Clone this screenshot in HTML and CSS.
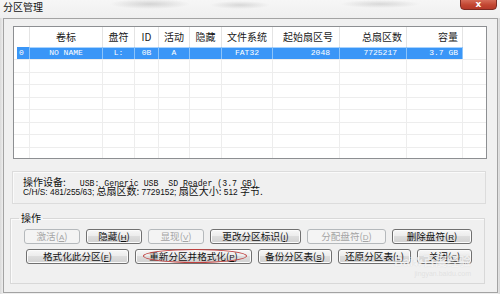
FILE: index.html
```html
<!DOCTYPE html>
<html lang="zh">
<head>
<meta charset="utf-8">
<link rel="stylesheet" href="styles.css">
</head>
<body>
<div class="screen">
  <div class="titlebar">
    <span class="title">分区管理</span>
    <div class="close-btn"><span>x</span></div>
  </div>
  <div class="dialog">
    <div class="list">
      <div class="row head">
        <div class="c c0"></div>
        <div class="c c1 ctr">卷标</div>
        <div class="c c2 ctr">盘符</div>
        <div class="c c3 ctr">ID</div>
        <div class="c c4 ctr">活动</div>
        <div class="c c5 ctr">隐藏</div>
        <div class="c c6 ctr">文件系统</div>
        <div class="c c7 rt">起始扇区号</div>
        <div class="c c8 rt">总扇区数</div>
        <div class="c c9 rt">容量</div>
        <div class="c c10"></div>
      </div>
      <div class="row sel">
        <div class="c c0 mono">0</div>
        <div class="c c1 ctr mono">NO NAME</div>
        <div class="c c2 ctr mono">L:</div>
        <div class="c c3 ctr mono">0B</div>
        <div class="c c4 ctr mono">A</div>
        <div class="c c5 ctr mono"></div>
        <div class="c c6 ctr mono">FAT32</div>
        <div class="c c7 rt mono">2048</div>
        <div class="c c8 rt mono">7725217</div>
        <div class="c c9 rt mono">3.7 GB</div>
        <div class="c c10"></div>
      </div>
      <div class="row"><div class="c c0"></div><div class="c c1"></div><div class="c c2"></div><div class="c c3"></div><div class="c c4"></div><div class="c c5"></div><div class="c c6"></div><div class="c c7"></div><div class="c c8"></div><div class="c c9"></div><div class="c c10"></div></div>
      <div class="row"><div class="c c0"></div><div class="c c1"></div><div class="c c2"></div><div class="c c3"></div><div class="c c4"></div><div class="c c5"></div><div class="c c6"></div><div class="c c7"></div><div class="c c8"></div><div class="c c9"></div><div class="c c10"></div></div>
      <div class="row"><div class="c c0"></div><div class="c c1"></div><div class="c c2"></div><div class="c c3"></div><div class="c c4"></div><div class="c c5"></div><div class="c c6"></div><div class="c c7"></div><div class="c c8"></div><div class="c c9"></div><div class="c c10"></div></div>
      <div class="row"><div class="c c0"></div><div class="c c1"></div><div class="c c2"></div><div class="c c3"></div><div class="c c4"></div><div class="c c5"></div><div class="c c6"></div><div class="c c7"></div><div class="c c8"></div><div class="c c9"></div><div class="c c10"></div></div>
      <div class="row"><div class="c c0"></div><div class="c c1"></div><div class="c c2"></div><div class="c c3"></div><div class="c c4"></div><div class="c c5"></div><div class="c c6"></div><div class="c c7"></div><div class="c c8"></div><div class="c c9"></div><div class="c c10"></div></div>
      <div class="row"><div class="c c0"></div><div class="c c1"></div><div class="c c2"></div><div class="c c3"></div><div class="c c4"></div><div class="c c5"></div><div class="c c6"></div><div class="c c7"></div><div class="c c8"></div><div class="c c9"></div><div class="c c10"></div></div>
      <div class="row"><div class="c c0"></div><div class="c c1"></div><div class="c c2"></div><div class="c c3"></div><div class="c c4"></div><div class="c c5"></div><div class="c c6"></div><div class="c c7"></div><div class="c c8"></div><div class="c c9"></div><div class="c c10"></div></div>
      <div class="row"><div class="c c0"></div><div class="c c1"></div><div class="c c2"></div><div class="c c3"></div><div class="c c4"></div><div class="c c5"></div><div class="c c6"></div><div class="c c7"></div><div class="c c8"></div><div class="c c9"></div><div class="c c10"></div></div>
    </div>

    <div class="info">
      <div class="line"><span class="cjk">操作设备:</span><span class="mono gap">USB: Generic USB&nbsp; SD Reader (3.7 GB)</span></div>
      <div class="line"><span class="sans">C/H/S: 481/255/63;</span> <span class="cjk">总扇区数:</span> <span class="sans">7729152;</span> <span class="cjk">扇区大小:</span> <span class="sans">512</span> <span class="cjk">字节.</span></div>
    </div>

    <fieldset class="ops">
      <legend>操作</legend>
      <div class="btn-row r1">
        <div class="btn dis w56">激活(<u>A</u>)</div>
        <div class="btn w56">隐藏(<u>H</u>)</div>
        <div class="btn dis w56">显现(<u>V</u>)</div>
        <div class="btn w91">更改分区标识(<u>I</u>)</div>
        <div class="btn dis w79">分配盘符(<u>D</u>)</div>
        <div class="btn w80">删除盘符(<u>R</u>)</div>
      </div>
      <div class="btn-row r2">
        <div class="btn w103">格式化此分区(<u>F</u>)</div>
        <div class="btn w117">重新分区并格式化(<u>P</u>)<span class="ring"></span></div>
        <div class="btn w74">备份分区表(<u>S</u>)</div>
        <div class="btn w73">还原分区表(<u>L</u>)</div>
        <div class="btn w55">关闭(<u>C</u>)</div>
      </div>
    </fieldset>
    <div class="watermark"><span class="wm1">Bai<span class="paw">&#10047;</span>百度经验</span><span class="wm2">jingyan.baidu.com</span></div>
  </div>
</div>
</body>
</html>
```

FILE: styles.css
```css
* { box-sizing: border-box; }
html, body { margin: 0; padding: 0; }
body {
  width: 500px;
  height: 294px;
  overflow: hidden;
  background: #ececec;
  font-family: "Noto Sans CJK SC", sans-serif;
  color: #000;
}
.screen {
  width: 500px;
  height: 294px;
  display: flex;
  flex-direction: column;
  background:
    linear-gradient(to right, #d9d9d9 0, #eeeeee 3px, #eeeeee 497px, #d5d5d5 500px);
}
.titlebar {
  position: relative;
  height: 18px;
  flex: none;
  background:
    radial-gradient(ellipse 40px 5px at 150px 4px, rgba(150,150,150,0.35), transparent),
    radial-gradient(ellipse 30px 4px at 240px 5px, rgba(150,150,150,0.3), transparent),
    radial-gradient(ellipse 40px 4px at 380px 4px, rgba(150,150,150,0.3), transparent),
    linear-gradient(#f6f6f6, #efefef);
}
.title {
  display: block;
  padding: 1px 0 0 3px;
  font-size: 10px;
  line-height: 12px;
  color: #111;
}
.close-btn {
  position: absolute;
  top: -2px;
  left: 460px;
  width: 37px;
  height: 12px;
  border: 1px solid #7d2b22;
  border-radius: 0 0 4px 4px;
  background: linear-gradient(#d9735f, #c24631 60%, #b5392a);
  display: flex;
  align-items: center;
  justify-content: center;
}
.close-btn span {
  color: #fff;
  font-family: "DejaVu Sans", sans-serif;
  font-weight: bold;
  font-size: 9px;
  line-height: 9px;
  margin-top: 1px;
}
.dialog {
  position: relative;
  margin: 0 2px 1px 3px;
  flex: 1;
  border: 1px solid #a3a3a3;
  background: #f0f0f0;
  display: flex;
  flex-direction: column;
  align-items: flex-start;
}
.list {
  margin: 7px 0 0 9px;
  width: 474px;
  height: 133px;
  border: 1px solid #8d8f92;
  background: #fff;
  overflow: hidden;
  display: flex;
  flex-direction: column;
}
.row {
  display: flex;
  height: 12.5px;
  flex: none;
  border-bottom: 1px solid #ededed;
}
.row.head {
  height: 20px;
  border-bottom: none;
  font-size: 10px;
  line-height: 20px;
  color: #1a1a1a;
}
.c {
  height: 100%;
  border-right: 1px solid #ededed;
  overflow: hidden;
  white-space: nowrap;
  flex: none;
}
.head .c { border-right-color: #e4e4e4; }
.c0 { width: 16px; }
.c1 { width: 73px; }
.c2 { width: 32px; }
.c3 { width: 24px; }
.c4 { width: 31px; }
.c5 { width: 32px; }
.c6 { width: 51px; }
.c7 { width: 67px; }
.c8 { width: 67px; }
.c9 { width: 56px; }
.c10 { width: 23px; border-right: none; }
.ctr { text-align: center; }
.rt { text-align: right; }
.head .c7 { padding-right: 6px; }
.head .c8 { padding-right: 4px; }
.head .c9 { padding-right: 4px; }
.mono { font-family: "Liberation Mono", monospace; font-size: 8px; }
.row.sel {
  height: 13px;
  border-bottom: 1px solid #ededed;
  line-height: 12px;
  color: #fff;
}
.sel .c { background: #3a96f7; border-right-color: #8cc4fa; box-shadow: inset 0 1px 0 #a7d3ff; }
.sel .c0 { background: linear-gradient(to right, #fff 3px, #3a96f7 3px); padding-left: 5px; box-shadow: none; }
.sel .c10 { background: #fff; box-shadow: none; }
.sel .c7 { padding-right: 9px; }
.sel .c8 { padding-right: 9px; }
.sel .c9 { padding-right: 4px; }

.info {
  margin: 12px 0 0 8px;
  width: 474px;
  height: 33px;
  border: 1px solid #dcdcdc;
  box-shadow: inset 1px 1px 0 #fafafa;
  padding: 5px 0 0 10px;
  display: flex;
  flex-direction: column;
}
.line {
  height: 9px;
  font-size: 10px;
  line-height: 9px;
  white-space: nowrap;
  color: #111;
}
.line .mono { font-size: 8.2px; }
.cjk { font-size: 10px; }
.sans { font-family: "Liberation Sans", sans-serif; font-size: 8.4px; }
.gap { margin-left: 14px; }

.ops {
  margin: 8px 0 0 6px;
  width: 475px;
  height: 72px;
  border: 1px solid #d8d8d8;
  box-shadow: inset 1px 1px 0 #fbfbfb;
  padding: 5px 0 0 0;
}
.ops legend {
  margin-left: 8px;
  padding: 0 2px;
  font-size: 10px;
  line-height: 12px;
  color: #111;
}
.btn-row {
  display: flex;
  gap: 6px;
}
.r1 { margin-left: 13px; }
.r2 { margin-left: 15px; margin-top: 5px; }
.btn {
  position: relative;
  height: 15px;
  flex: none;
  border: 1px solid #707070;
  border-radius: 3px;
  background: linear-gradient(#f7f7f7 0, #ececec 45%, #dddddd 50%, #d1d1d1 100%);
  box-shadow: inset 0 0 0 1px #fbfbfb;
  font-size: 9.6px;
  line-height: 13px;
  text-align: center;
  color: #111;
  white-space: nowrap;
}
.btn u { text-decoration: underline; text-underline-offset: 1px; font-family: "Liberation Sans", sans-serif; font-size: 8px; }
.btn.dis {
  border-color: #b5b9bc;
  background: #f4f4f4;
  box-shadow: none;
  color: #a4a4a4;
}
.w55 { width: 55px; }
.w56 { width: 56px; }
.w73 { width: 73px; }
.w74 { width: 74px; }
.w79 { width: 79px; }
.w80 { width: 80px; }
.w91 { width: 91px; }
.w103 { width: 103px; }
.w117 { width: 117px; }
.ring {
  position: absolute;
  left: 7px;
  top: -1px;
  width: 104px;
  height: 14px;
  border: 1px solid #c0403f;
  border-radius: 50%;
}
.watermark {
  position: absolute;
  right: 26px;
  top: 236px;
  display: flex;
  flex-direction: column;
  align-items: flex-end;
  color: rgba(255,255,255,0.7);
  pointer-events: none;
}
.wm1 { font-size: 12px; line-height: 14px; font-weight: bold; font-family: "Liberation Sans", "Noto Sans CJK SC", sans-serif; text-shadow: 0 0 1px rgba(160,160,160,0.35); }
.paw { font-size: 10px; }
.wm2 { font-family: "Liberation Sans", sans-serif; font-size: 7px; line-height: 8px; color: rgba(205,205,205,0.45); }
```
